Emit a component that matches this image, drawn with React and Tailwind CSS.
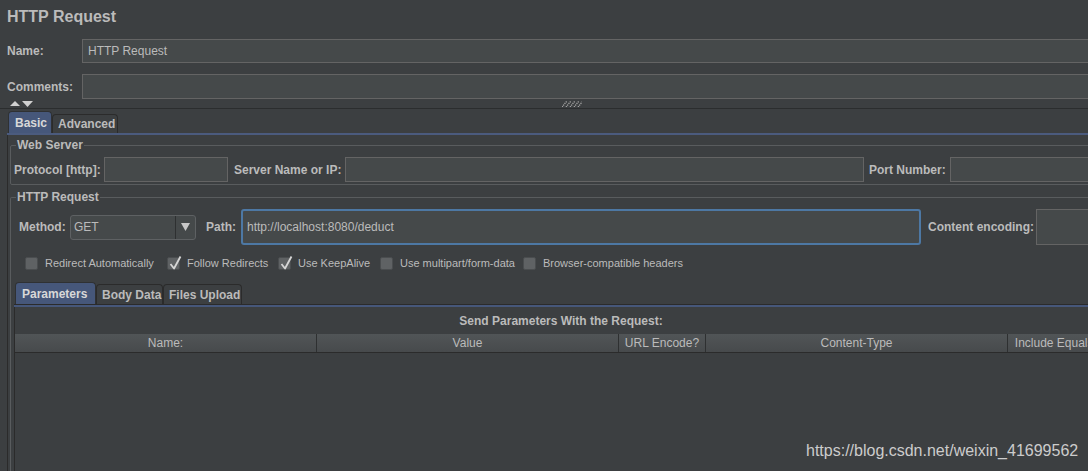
import React from "react";

const lbl = "text-[12px] font-bold leading-[14px] whitespace-nowrap text-[#bbbbbb]";

function Check({ checked, label, w }) {
  return (
    <div className="flex items-center h-[13px] shrink-0" style={{ width: w }}>
      <div className="relative w-[13px] h-[13px] rounded-[2px] bg-[#5f6264] border border-[#4a4d4f] shrink-0">
        {checked && (
          <svg className="absolute left-[0px] top-[-3px]" width="14" height="16" viewBox="0 0 14 16">
            <path d="M2.5 9 L6 13.5 L12.5 1.5" fill="none" stroke="#d6d6d6" strokeWidth="1.8" strokeLinejoin="round" />
          </svg>
        )}
      </div>
      <span className="ml-[7px] text-[11px] leading-[13px] whitespace-nowrap text-[#bbbbbb]">{label}</span>
    </div>
  );
}

function HeadCell({ children, w, last }) {
  return (
    <div
      className={`h-full flex items-center justify-center text-[12px] text-[#bbbbbb] whitespace-nowrap shrink-0 ${last ? "" : "border-r border-[#2e3031]"}`}
      style={{ width: w }}
    >
      {children}
    </div>
  );
}

export default function App() {
  return (
    <div className="w-[1088px] h-[471px] overflow-hidden bg-[#3c3f41] text-[#bbbbbb] font-['Liberation_Sans',Arial,sans-serif] relative">
      <div className="w-[1120px] flex flex-col">
        {/* Title */}
        <div className="h-[39px] pl-[7px] pt-[7px] text-[16px] leading-[20px] font-bold">HTTP Request</div>

        {/* Name */}
        <div className="flex items-center h-[24px]">
          <div className={`w-[82px] pl-[7px] ${lbl}`}>Name:</div>
          <div className="flex-1 h-[24px] bg-[#45494a] border border-[#646464] flex items-center px-[5px] text-[12px]">
            HTTP Request
          </div>
        </div>

        {/* Comments */}
        <div className="flex items-center h-[25px] mt-[11px]">
          <div className={`w-[82px] pl-[7px] ${lbl}`}>Comments:</div>
          <div className="flex-1 h-[25px] bg-[#45494a] border border-[#646464]" />
        </div>

        {/* splitter row */}
        <div className="h-[9px] flex items-start">
          <svg className="ml-[9px] mt-[1px]" width="25" height="7" viewBox="0 0 25 7">
            <polygon points="1,6 6,1 11,6" fill="#d0d0d0" />
            <polygon points="13,1 24,1 18.5,7" fill="#d0d0d0" />
          </svg>
          <svg className="ml-[528px] mt-[2px]" width="20" height="6" viewBox="0 0 20 6">
            {[0, 4, 8, 12, 16].map((x) => (
              <path key={x} d={`M${x} 6 L${x + 5} 0`} stroke="#a8a8a8" strokeWidth="1.3" strokeDasharray="1.2 0.8" />
            ))}
          </svg>
        </div>
        <div className="h-px bg-[#2b2d2e]" />
        <div className="h-[2px]" />

        {/* Top tabs */}
        <div className="h-[22px] flex items-end pl-[8px]">
          <div className="w-[44px] h-[22px] rounded-t-[4px] bg-[#46577a] border border-b-0 border-[#2f3133] flex items-center pl-[6px] text-[12px] font-bold text-[#d8d8d8]">
            Basic
          </div>
          <div className="w-[66px] h-[19px] rounded-t-[4px] border border-b-0 border-[#2b2b2b] flex items-center pl-[5px] text-[12px] font-bold">
            Advanced
          </div>
        </div>
        <div className="h-[2px] ml-[7px] bg-[#4b5b7e]" />

        {/* outer tab panel */}
        <div className="ml-[7px] border-l border-[#2b2b2b] pl-[2px] pt-[3px] flex flex-col">
          {/* Web Server */}
          <fieldset className="border border-[#595c5e] rounded-[2px]">
            <legend className={`ml-[5px] px-[1px] ${lbl}`}>Web Server</legend>
            <div className="pt-[5px] pb-[2px] pl-[3px] flex items-center h-[32px] box-content-none">
              <div className={`w-[90px] ${lbl}`}>Protocol [http]:</div>
              <div className="w-[124px] h-[25px] bg-[#45494a] border border-[#646464] shrink-0" />
              <div className={`ml-[6px] w-[111px] ${lbl}`}>Server Name or IP:</div>
              <div className="w-[519px] h-[25px] bg-[#45494a] border border-[#646464] shrink-0" />
              <div className={`ml-[5px] w-[81px] ${lbl}`}>Port Number:</div>
              <div className="flex-1 h-[25px] bg-[#45494a] border border-[#646464]" />
            </div>
          </fieldset>

          {/* HTTP Request */}
          <fieldset className="mt-[5px] border border-b-0 border-[#595c5e] rounded-t-[2px]">
            <legend className={`ml-[5px] px-[1px] ${lbl}`}>HTTP Request</legend>
            <div className="pt-[5px] pl-[8px] flex items-center h-[41px]">
              <div className={`w-[51px] ${lbl}`}>Method:</div>
              <div className="w-[126px] h-[25px] bg-[#45494a] border border-[#5e6163] rounded-[3px] flex shrink-0">
                <div className="flex-1 flex items-center pl-[3px] text-[12px]">GET</div>
                <div className="w-[20px] border-l border-[#2e3031] flex items-center justify-center">
                  <svg width="9" height="8" viewBox="0 0 9 8">
                    <polygon points="0,0 9,0 4.5,8" fill="#c8c8c8" />
                  </svg>
                </div>
              </div>
              <div className={`ml-[10px] w-[35px] ${lbl}`}>Path:</div>
              <div className="w-[680px] h-[36px] bg-[#45494a] border-2 border-[#4d78a4] rounded-[3px] flex items-center pl-[4px] text-[12px] shrink-0">
                http://localhost:8080/deduct
              </div>
              <div className={`ml-[7px] w-[108px] ${lbl}`}>Content encoding:</div>
              <div className="flex-1 h-[36px] bg-[#45494a] border border-[#646464]" />
            </div>

            <div className="mt-[12px] pl-[14px] flex items-center">
              <Check label="Redirect Automatically" w={142} />
              <Check checked label="Follow Redirects" w={111} />
              <Check checked label="Use KeepAlive" w={102} />
              <Check label="Use multipart/form-data" w={143} />
              <Check label="Browser-compatible headers" w={200} />
            </div>

            {/* Parameters panel */}
            <div className="mt-[12px] ml-[3px] w-[1093px] flex flex-col">
              <div className="h-[22px] flex items-end pl-[1px]">
                <div className="w-[81px] h-[22px] rounded-t-[4px] bg-[#46577a] border border-b-0 border-[#2f3133] flex items-center pl-[6px] text-[12px] font-bold text-[#d8d8d8]">
                  Parameters
                </div>
                <div className="w-[67px] h-[20px] rounded-t-[4px] border border-b-0 border-[#2b2b2b] flex items-center pl-[5px] text-[12px] font-bold">
                  Body Data
                </div>
                <div className="w-[79px] h-[20px] rounded-t-[4px] border border-b-0 border-[#2b2b2b] flex items-center pl-[5px] text-[12px] font-bold">
                  Files Upload
                </div>
              </div>
              <div className="h-px bg-[#2b2b2b]" />
              <div className="h-[2px] bg-[#46577a]" />
              <div className="border-l border-[#2b2b2b] flex flex-col h-[200px]">
                <div className="h-[27px] flex items-center justify-center text-[12px] font-bold">
                  Send Parameters With the Request:
                </div>
                <div className="h-[19px] flex border-b border-[#2b2b2b] bg-gradient-to-b from-[#515557] to-[#474a4c]">
                  <HeadCell w={302}>Name:</HeadCell>
                  <HeadCell w={302}>Value</HeadCell>
                  <HeadCell w={87}>URL Encode?</HeadCell>
                  <HeadCell w={302}>Content-Type</HeadCell>
                  <HeadCell w={99} last>Include Equals?</HeadCell>
                </div>
              </div>
            </div>
          </fieldset>
        </div>
      </div>

      <div className="absolute left-[806px] top-[441px] text-[16px] leading-[20px] text-[#cccccc] whitespace-nowrap">
        https://blog.csdn.net/weixin_41699562
      </div>
    </div>
  );
}
